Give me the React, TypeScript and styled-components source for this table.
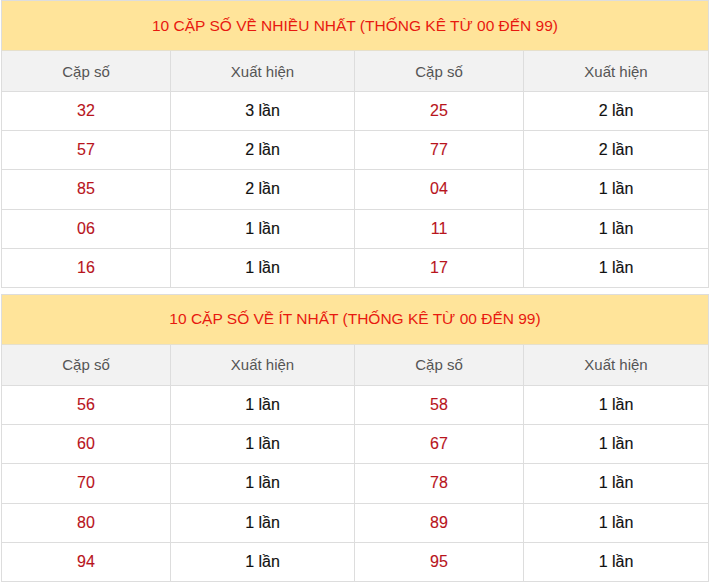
import React from "react";
import styled, { createGlobalStyle } from "styled-components";

const Global = createGlobalStyle`
  html, body { margin: 0; padding: 0; background: #fff; }
  body { font-family: "Liberation Sans", Arial, Helvetica, sans-serif; }
`;

const Page = styled.div`
  display: flex;
  flex-direction: column;
  gap: 6px;
  padding: 0 2px 0 1px;
`;

const Table = styled.div`
  border: 1px solid #dddddd;
  display: flex;
  flex-direction: column;
`;

const Title = styled.div`
  height: 49px;
  background: #ffe49a;
  color: #e8190f;
  font-size: 15.5px;
  display: flex;
  align-items: center;
  justify-content: center;
  border-bottom: 1px solid #e6e0cc;
`;

const Row = styled.div<{ $head?: boolean; $last?: boolean }>`
  display: grid;
  grid-template-columns: 169px 184px 169px 1fr;
  height: ${(p) => (p.$head ? "40px" : "38.2px")};
  background: ${(p) => (p.$head ? "#f2f2f2" : "#fff")};
  border-bottom: ${(p) => (p.$last ? "none" : "1px solid #dddddd")};
`;

const Cell = styled.div<{ $kind: "head" | "num" | "count" }>`
  display: flex;
  align-items: center;
  justify-content: center;
  border-right: 1px solid #dddddd;
  &:last-child { border-right: none; }
  font-size: ${(p) => (p.$kind === "head" ? "15px" : "16px")};
  color: ${(p) =>
    p.$kind === "head" ? "#555555" : p.$kind === "num" ? "#b8141c" : "#111111"};
  -webkit-text-stroke: ${(p) =>
    p.$kind === "count" ? "0.15px #111" : p.$kind === "num" ? "0.1px #b8141c" : "0"};
`;

type Pair = [string, string];

const top: [Pair, Pair][] = [
  [["32", "3 lần"], ["25", "2 lần"]],
  [["57", "2 lần"], ["77", "2 lần"]],
  [["85", "2 lần"], ["04", "1 lần"]],
  [["06", "1 lần"], ["11", "1 lần"]],
  [["16", "1 lần"], ["17", "1 lần"]],
];

const bottom: [Pair, Pair][] = [
  [["56", "1 lần"], ["58", "1 lần"]],
  [["60", "1 lần"], ["67", "1 lần"]],
  [["70", "1 lần"], ["78", "1 lần"]],
  [["80", "1 lần"], ["89", "1 lần"]],
  [["94", "1 lần"], ["95", "1 lần"]],
];

function StatTable({ title, rows }: { title: string; rows: [Pair, Pair][] }) {
  return (
    <Table>
      <Title>{title}</Title>
      <Row $head>
        <Cell $kind="head">Cặp số</Cell>
        <Cell $kind="head">Xuất hiện</Cell>
        <Cell $kind="head">Cặp số</Cell>
        <Cell $kind="head">Xuất hiện</Cell>
      </Row>
      {rows.map((r, i) => (
        <Row key={i} $last={i === rows.length - 1}>
          <Cell $kind="num">{r[0][0]}</Cell>
          <Cell $kind="count">{r[0][1]}</Cell>
          <Cell $kind="num">{r[1][0]}</Cell>
          <Cell $kind="count">{r[1][1]}</Cell>
        </Row>
      ))}
    </Table>
  );
}

export default function App() {
  return (
    <>
      <Global />
      <Page>
        <StatTable title="10 CẶP SỐ VỀ NHIỀU NHẤT (THỐNG KÊ TỪ 00 ĐẾN 99)" rows={top} />
        <StatTable title="10 CẶP SỐ VỀ ÍT NHẤT (THỐNG KÊ TỪ 00 ĐẾN 99)" rows={bottom} />
      </Page>
    </>
  );
}
